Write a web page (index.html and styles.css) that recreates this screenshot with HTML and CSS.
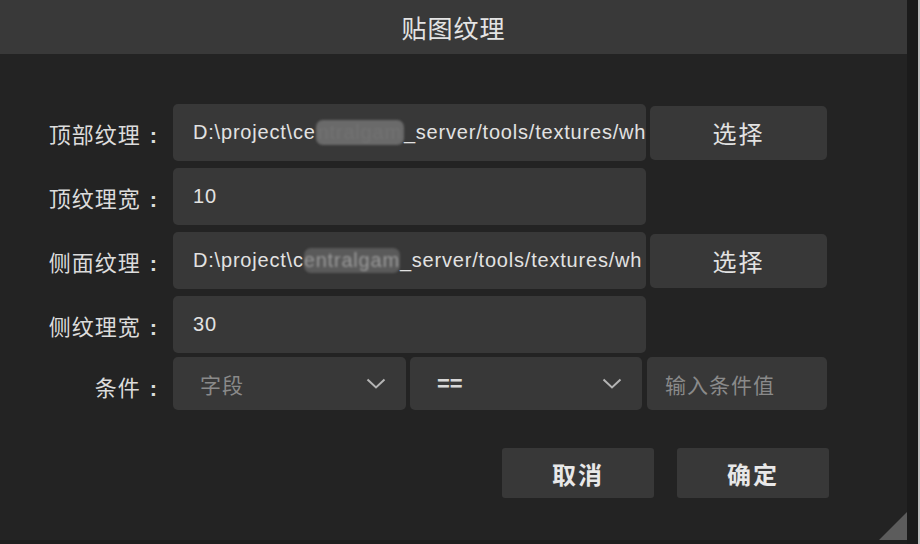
FILE: index.html
```html
<html><head>
  <meta charset="UTF-8">
  <meta name="viewport" content="width=device-width, initial-scale=1.0">
  <title>贴图纹理</title>
  <link rel="stylesheet" href="styles.css">
</head>
<body>
  <div class="screen">
    <div class="dialog">
      <div class="dialog-header">贴图纹理</div>
      <div class="dialog-body">
        <div class="form">
          <div class="form-label">顶部纹理<span class="colon">:</span></div>
          <div class="field path">D:\project\ce<span class="redact">ntralgam</span>_server/tools/textures/wh</div>
          <div class="btn">选择</div>

          <div class="form-label">顶纹理宽<span class="colon">:</span></div>
          <div class="field">10</div>
          <div></div>

          <div class="form-label">侧面纹理<span class="colon">:</span></div>
          <div class="field path">D:\project\c<span class="redact light">entralgam</span>_server/tools/textures/wh</div>
          <div class="btn">选择</div>

          <div class="form-label">侧纹理宽<span class="colon">:</span></div>
          <div class="field">30</div>
          <div></div>

          <div class="form-label cond-label">条件<span class="colon">:</span></div>
          <div class="cond">
            <div class="select">
              <span class="placeholder">字段</span>
              <svg class="chevron" width="20" height="11" viewBox="0 0 20 11"><path d="M1.5 1.5 L10 9.5 L18.5 1.5" fill="none" stroke="#b4b4b4" stroke-width="2"/></svg>
            </div>
            <div class="select">
              <span class="value">==</span>
              <svg class="chevron" width="20" height="11" viewBox="0 0 20 11"><path d="M1.5 1.5 L10 9.5 L18.5 1.5" fill="none" stroke="#b4b4b4" stroke-width="2"/></svg>
            </div>
            <div class="cond-input"><span class="placeholder">输入条件值</span></div>
          </div>
        </div>
        <div class="actions">
          <div class="btn action">取消</div>
          <div class="btn action">确定</div>
        </div>
      </div>
      <div class="grip"></div>
    </div>
    <div class="side-edge"></div>
  </div>
</body>
</html>
```

FILE: styles.css
```css
body, html {
  margin: 0;
  padding: 0;
  background-color: #1e1e1e;
  font-family: "Noto Sans CJK SC", sans-serif;
  overflow: hidden;
}
.screen {
  display: flex;
  width: 920px;
  height: 544px;
}
.dialog {
  position: relative;
  width: 907px;
  height: 540px;
  background-color: #232323;
  display: flex;
  flex-direction: column;
}
.dialog-header {
  height: 54px;
  background-color: #393939;
  color: #e4e4e4;
  font-size: 25px;
  letter-spacing: 1px;
  display: flex;
  align-items: center;
  justify-content: center;
}
.dialog-body {
  padding-top: 50px;
}
.form {
  display: grid;
  grid-template-columns: 165px 473px 177px;
  grid-auto-rows: 57px;
  column-gap: 4px;
  row-gap: 7px;
  padding-left: 4px;
}
.form-label {
  color: #dcdcdc;
  font-size: 22px;
  letter-spacing: 1px;
  text-align: right;
  align-self: center;
  padding-right: 12px;
}
.colon {
  font-family: "Liberation Sans", Arial, sans-serif;
  font-weight: bold;
  letter-spacing: 0;
  margin-left: 9px;
}
.cond-label {
  margin-top: -6px;
}
.field {
  background-color: #383838;
  border-radius: 5px;
  color: #e2e2e2;
  font-family: "Liberation Sans", Arial, sans-serif;
  font-size: 20px;
  letter-spacing: 0.8px;
  display: flex;
  align-items: center;
  padding: 0 2px 0 20px;
  white-space: nowrap;
  overflow: hidden;
}
.redact {
  background-color: #6a6a6a;
  color: #727272;
  border-radius: 7px;
  filter: blur(1px);
  padding: 1px 2px;
}
.redact.light {
  background-color: #5a5a5a;
  color: #9a9a9a;
  padding: 1px 0;
}
.btn {
  background-color: #383838;
  border-radius: 5px;
  color: #e2e2e2;
  font-size: 24px;
  letter-spacing: 2px;
  height: 54px;
  align-self: center;
  display: flex;
  align-items: center;
  justify-content: center;
}
.cond {
  grid-column: 2 / 4;
  display: flex;
  height: 53px;
  margin-top: -3px;
}
.select {
  width: 233px;
  background-color: #383838;
  border-radius: 5px;
  display: flex;
  align-items: center;
  justify-content: space-between;
  padding: 0 20px 0 27px;
  box-sizing: border-box;
  margin-right: 4px;
}
.select + .select {
  width: 232px;
  margin-right: 5px;
}
.cond-input {
  width: 180px;
  background-color: #383838;
  border-radius: 5px;
  display: flex;
  align-items: center;
  padding-left: 18px;
  box-sizing: border-box;
}
.placeholder {
  color: #8a8a8a;
  font-size: 21px;
  letter-spacing: 1px;
}
.value {
  color: #d8d8d8;
  font-family: "Liberation Sans", Arial, sans-serif;
  font-size: 22px;
  font-weight: bold;
}
.actions {
  display: flex;
  justify-content: flex-end;
  gap: 23px;
  margin-top: 31px;
  padding-right: 78px;
}
.btn.action {
  width: 152px;
  height: 50px;
  border-radius: 3px;
  font-weight: bold;
  color: #e8e8e8;
}
.grip {
  position: absolute;
  right: 0;
  bottom: 0;
  width: 0;
  height: 0;
  border-left: 28px solid transparent;
  border-bottom: 28px solid #5c5c5c;
}
.side-edge {
  width: 11px;
  height: 544px;
  background-color: #1b1b1b;
  border-right: 2px solid #bdbdbd;
  box-sizing: content-box;
}
```
